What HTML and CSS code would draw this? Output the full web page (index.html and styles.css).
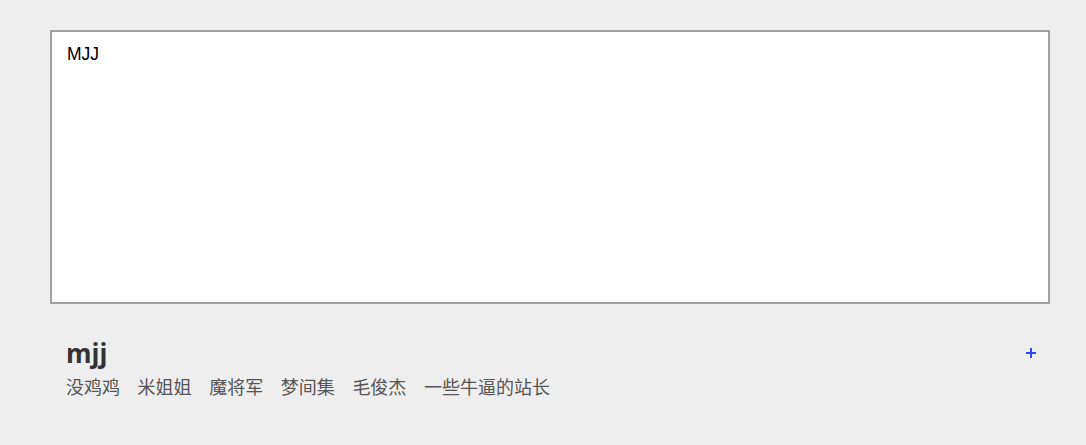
FILE: index.html
```html
<!DOCTYPE html>
<html lang="zh-CN">
<head>
  <meta charset="UTF-8">
  <meta name="viewport" content="width=device-width, initial-scale=1.0">
  <title>mjj</title>
  <link rel="stylesheet" href="styles.css">
</head>
<body>
  <main class="wrap">
    <div class="board">MJJ</div>
    <section class="info">
      <div class="info-head">
        <h1 class="name">mjj</h1>
        <span class="add" title="添加">
          <svg width="10" height="10" viewBox="0 0 10 10"><path d="M5 0v10M0 5h10" stroke="#3344ff" stroke-width="2"/></svg>
        </span>
      </div>
      <ul class="tags">
        <li>没鸡鸡</li>
        <li>米姐姐</li>
        <li>魔将军</li>
        <li>梦间集</li>
        <li>毛俊杰</li>
        <li>一些牛逼的站长</li>
      </ul>
    </section>
  </main>
</body>
</html>
```

FILE: styles.css
```css
*{box-sizing:border-box;margin:0;padding:0;}
body{
  background:#eee;
  font-family:'Liberation Sans', Arial, sans-serif;
  color:#333;
}
.wrap{width:1000px;margin:30px 50px;}

.board{
  height:274px;
  background:#fff;
  border:2px solid #a0a0a0;
  padding:12px 15px;
  font-size:17.5px;
  color:#000;
}

.info{padding:33px 14px 0 16px;}
.info-head{display:flex;justify-content:space-between;align-items:center;height:32px;}
.name{font-family:'Open Sans', sans-serif;font-size:26px;font-weight:700;line-height:32px;color:#333;}
.add{display:flex;cursor:pointer;}
.add svg{display:block;}

.tags{
  list-style:none;
  display:flex;
  gap:17.6px;
  margin-top:5px;
  font-family:'Noto Sans CJK SC', sans-serif;
  font-size:18px;
  line-height:24px;
  color:#555;
}
```
